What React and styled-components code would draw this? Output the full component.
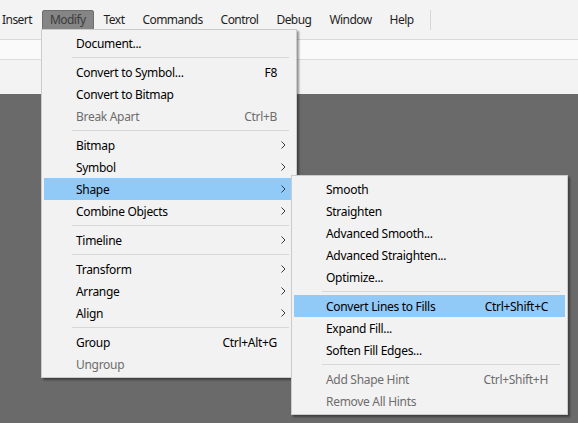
import React from 'react'
import styled, { createGlobalStyle } from 'styled-components'

const Global = createGlobalStyle`
  html, body { margin: 0; padding: 0; }
  body {
    font-family: "Noto Sans", "Liberation Sans", sans-serif;
    font-size: 12px;
    letter-spacing: -0.3px;
    color: #000;
    background: #6a6a6a;
  }
`

const Screen = styled.div`
  position: relative;
  width: 578px;
  height: 423px;
  overflow: hidden;
  display: flex;
  flex-direction: column;
  background: #6a6a6a;
`

const MenuBar = styled.div`
  height: 39px;
  display: flex;
  align-items: center;
  gap: 2px;
  margin-left: -6px;
  background: #f3f3f3;
  border-bottom: 1px solid #dadada;
  letter-spacing: -0.55px;
`

const BarItem = styled.div`
  height: 18px;
  line-height: 18px;
  padding: 0 7px;
  border: 1px solid ${p => (p.$open ? '#6f6f6f' : 'transparent')};
  border-radius: 2px;
  background: ${p => (p.$open ? '#858585' : 'transparent')};
  color: ${p => (p.$open ? '#3c3c3c' : '#1e1e1e')};
`

const BarDivider = styled.div`
  width: 1px;
  height: 20px;
  margin-left: 6px;
  background: #d6d6d6;
`

const Strip = styled.div`
  height: 19px;
  background: #fafafa;
  border-bottom: 1px solid #dcdcdc;
`

const Toolbar = styled.div`
  height: 34px;
  background: #f3f3f3;
`

const Stage = styled.div`
  flex: 1;
  background: #6a6a6a;
`

const Menu = styled.div`
  position: absolute;
  left: ${p => p.$left}px;
  top: ${p => p.$top}px;
  width: ${p => p.$width}px;
  box-sizing: border-box;
  padding: 2px;
  background: #f2f2f2;
  border: 1px solid #cbcbcb;
  box-shadow: 2px 2px 2px rgba(0, 0, 0, 0.4);
  z-index: ${p => p.$z || 1};
`

const Row = styled.div`
  position: relative;
  height: 22px;
  display: flex;
  align-items: center;
  padding: 0 17px 0 32px;
  background: ${p => (p.$active ? '#91c9f7' : 'transparent')};
  color: ${p => (p.$disabled ? '#6d6d6d' : '#000')};
  white-space: nowrap;
`

const Label = styled.span`
  flex: 1;
`

const Shortcut = styled.span`
  margin-left: 20px;
`

const Arrow = styled.svg`
  position: absolute;
  right: 8px;
  top: 7px;
`

const Separator = styled.div`
  height: 7px;
  display: flex;
  align-items: center;
  padding-left: 28px;
  &::after {
    content: '';
    flex: 1;
    height: 1px;
    margin-right: 5px;
    background: #d7d7d7;
  }
`

const Chevron = () => (
  <Arrow width="5" height="8" viewBox="0 0 5 8">
    <polyline points="0.5,0.5 4,4 0.5,7.5" fill="none" stroke="#3a3a3a" strokeWidth="1" />
  </Arrow>
)

const barItems = ['Insert', 'Modify', 'Text', 'Commands', 'Control', 'Debug', 'Window', 'Help']

const modifyMenu = [
  { label: 'Document...' },
  '-',
  { label: 'Convert to Symbol...', key: 'F8' },
  { label: 'Convert to Bitmap' },
  { label: 'Break Apart', key: 'Ctrl+B', disabled: true },
  '-',
  { label: 'Bitmap', sub: true },
  { label: 'Symbol', sub: true },
  { label: 'Shape', sub: true, active: true, open: true },
  { label: 'Combine Objects', sub: true },
  '-',
  { label: 'Timeline', sub: true },
  '-',
  { label: 'Transform', sub: true },
  { label: 'Arrange', sub: true },
  { label: 'Align', sub: true },
  '-',
  { label: 'Group', key: 'Ctrl+Alt+G' },
  { label: 'Ungroup', disabled: true },
]

const shapeMenu = [
  { label: 'Smooth' },
  { label: 'Straighten' },
  { label: 'Advanced Smooth...' },
  { label: 'Advanced Straighten...' },
  { label: 'Optimize...' },
  '-',
  { label: 'Convert Lines to Fills', key: 'Ctrl+Shift+C', active: true },
  { label: 'Expand Fill...' },
  { label: 'Soften Fill Edges...' },
  '-',
  { label: 'Add Shape Hint', key: 'Ctrl+Shift+H', disabled: true },
  { label: 'Remove All Hints', disabled: true },
]

const MenuRows = ({ items, children }) =>
  items.map((it, i) =>
    it === '-' ? (
      <Separator key={i} />
    ) : (
      <Row key={i} $active={it.active} $disabled={it.disabled}>
        <Label>{it.label}</Label>
        {it.key && <Shortcut>{it.key}</Shortcut>}
        {it.sub && <Chevron />}
        {it.open && children}
      </Row>
    )
  )

export default function App() {
  return (
    <>
      <Global />
      <Screen>
        <MenuBar>
          {barItems.map(t => (
            <BarItem key={t} $open={t === 'Modify'}>{t}</BarItem>
          ))}
          <BarDivider />
        </MenuBar>
        <Strip />
        <Toolbar />
        <Stage />

        <Menu $left={41} $top={29} $width={256}>
          <MenuRows items={modifyMenu}>
            <Menu $left={247} $top={-3} $width={277} $z={2}>
              <MenuRows items={shapeMenu} />
            </Menu>
          </MenuRows>
        </Menu>
      </Screen>
    </>
  )
}
